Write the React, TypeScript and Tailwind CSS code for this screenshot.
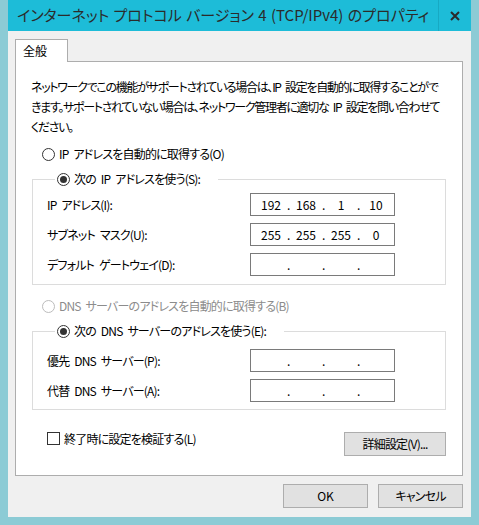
import React from "react";

const FONT = "[font-family:'Noto_Sans_CJK_JP',sans-serif] [font-feature-settings:'palt']";
const T = "text-[12px] tracking-[-0.8px] [word-spacing:3px]";

function Radio({ checked, disabled }: { checked?: boolean; disabled?: boolean }) {
  return (
    <span
      className={`flex items-center justify-center w-[13px] h-[13px] rounded-full border bg-white shrink-0 ${
        disabled ? "border-[#bcbcbc]" : "border-[#333333]"
      }`}
    >
      {checked && <span className="w-[7px] h-[7px] rounded-full bg-[#333333]" />}
    </span>
  );
}

function IpBox({ values }: { values?: string[] }) {
  const v = values ?? ["", "", "", ""];
  return (
    <div className="w-[145px] h-[23px] border border-[#7a7a7a] bg-white flex items-center pl-[4px] text-[12px] text-black">
      {v.map((x, i) => (
        <React.Fragment key={i}>
          <span className="w-[32px] text-center leading-[21px]">{x}</span>
          {i < 3 && <span className="w-[3px] text-center leading-[21px]">.</span>}
        </React.Fragment>
      ))}
    </div>
  );
}

function Row({ label, values, className = "" }: { label: string; values?: string[]; className?: string }) {
  return (
    <div className={`flex items-center h-[23px] ${className}`}>
      <span className={`w-[203px] ${T} text-black whitespace-nowrap`}>{label}</span>
      <IpBox values={values} />
    </div>
  );
}

export default function App() {
  return (
    <div className={`w-[479px] h-[525px] bg-[#8ccbd5] px-[8px] pb-[8px] flex flex-col ${FONT}`}>
      {/* title bar */}
      <div className="h-[31px] bg-[#1dbcd8] flex items-center shrink-0">
        <div className="flex-1 pl-[9px] text-[15px] text-[#2b2b2b] whitespace-nowrap [word-spacing:1px]">
          インターネット プロトコル バージョン 4 (TCP/IPv4) のプロパティ
        </div>
        <div className="w-[33px] h-full border-l border-[#17a9c3] flex items-center justify-center">
          <svg width="10" height="10" viewBox="0 0 10 10">
            <path d="M1 1 L9 9 M9 1 L1 9" stroke="#2b2b2b" strokeWidth="2" />
          </svg>
        </div>
      </div>

      {/* body */}
      <div className="flex-1 bg-[#f0f0f0] pl-[7px] pr-[8px] pt-[8px] flex flex-col">
        {/* tab */}
        <div className="relative z-10 w-[53px] h-[23px] bg-white border border-b-0 border-[#adadad] pl-[7px] pt-[2px] text-[12px] text-black -mb-px">
          全般
        </div>
        {/* panel */}
        <div className="h-[415px] bg-white border border-[#adadad] flex flex-col px-[15px]">
          <p className="mt-[15px] text-[12px] tracking-[-1.3px] [word-spacing:3px] leading-[20px] text-black whitespace-nowrap">
            ネットワークでこの機能がサポートされている場合は、IP 設定を自動的に取得することがで
            <br />
            きます。サポートされていない場合は、ネットワーク管理者に適切な IP 設定を問い合わせて
            <br />
            ください。
          </p>

          <label className={`mt-[9px] ml-[11px] flex items-center gap-[4px] h-[16px] ${T} text-black whitespace-nowrap`}>
            <Radio />
            <span>IP アドレスを自動的に取得する(O)</span>
          </label>

          <fieldset className="mt-[9px] ml-[1px] mr-[1px] border border-[#dcdcdc] pl-[14px] pb-[8px]">
            <legend className={`ml-[8px] pl-[2px] pr-[18px] h-[16px] flex items-center gap-[4px] ${T} text-black whitespace-nowrap`}>
              <Radio checked />
              <span>次の IP アドレスを使う(S):</span>
            </legend>
            <Row className="mt-[6px]" label="IP アドレス(I):" values={["192", "168", "1", "10"]} />
            <Row className="mt-[7px]" label="サブネット マスク(U):" values={["255", "255", "255", "0"]} />
            <Row className="mt-[7px]" label="デフォルト ゲートウェイ(D):" />
          </fieldset>

          <label className={`mt-[13px] ml-[11px] flex items-center gap-[4px] h-[16px] ${T} text-[#8c8c8c] whitespace-nowrap`}>
            <Radio disabled />
            <span>DNS サーバーのアドレスを自動的に取得する(B)</span>
          </label>

          <fieldset className="mt-[9px] ml-[1px] mr-[1px] border border-[#dcdcdc] pl-[14px] pb-[7px]">
            <legend className={`ml-[8px] pl-[2px] pr-[18px] h-[16px] flex items-center gap-[4px] ${T} text-black whitespace-nowrap`}>
              <Radio checked />
              <span>次の DNS サーバーのアドレスを使う(E):</span>
            </legend>
            <Row className="mt-[10px]" label="優先 DNS サーバー(P):" />
            <Row className="mt-[7px]" label="代替 DNS サーバー(A):" />
          </fieldset>

          <div className="mt-[22px] flex items-start justify-between pl-[16px] pr-[1px]">
            <label className={`flex items-center gap-[4px] h-[13px] ${T} text-black whitespace-nowrap`}>
              <span className="w-[13px] h-[13px] border border-[#333333] bg-white shrink-0" />
              <span>終了時に設定を検証する(L)</span>
            </label>
            <button className={`w-[102px] h-[24px] bg-[#e1e1e1] border border-[#adadad] ${T} text-black flex items-center justify-center`}>
              詳細設定(V)...
            </button>
          </div>
        </div>

        {/* bottom buttons */}
        <div className="mt-[8px] flex justify-end gap-[10px]">
          <button className="w-[85px] h-[24px] bg-[#e1e1e1] border border-[#adadad] text-[12px] text-black flex items-center justify-center">
            OK
          </button>
          <button className={`w-[85px] h-[24px] bg-[#e1e1e1] border border-[#adadad] ${T} text-black flex items-center justify-center`}>
            キャンセル
          </button>
        </div>
      </div>
    </div>
  );
}
